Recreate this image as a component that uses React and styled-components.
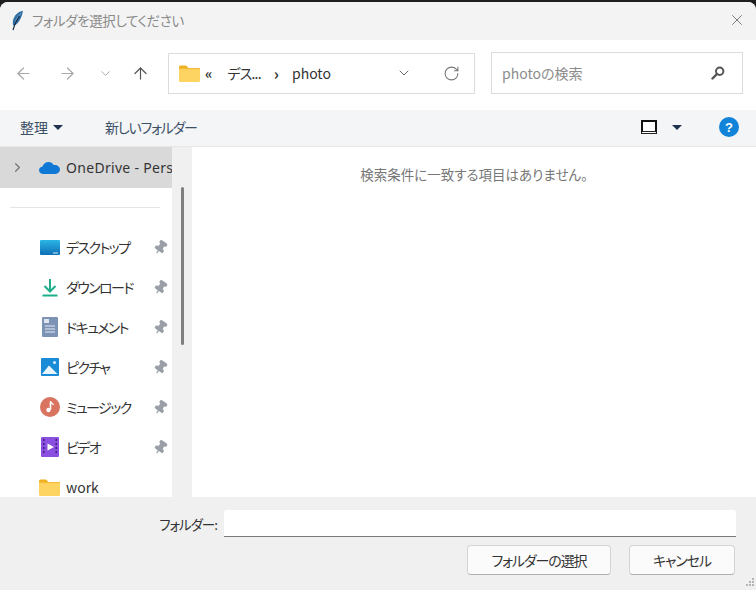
import React from 'react';
import styled, { createGlobalStyle } from 'styled-components';
import { ArrowLeft, ArrowRight, ArrowUp, ChevronDown, ChevronRight, RotateCw, X, Pin } from 'lucide-react';

const GlobalStyle = createGlobalStyle`
  html, body { margin: 0; padding: 0; background: #1f1f1f; }
  body {
    font-family: "Noto Sans CJK JP", "Noto Sans", sans-serif;
    font-feature-settings: "palt";
  }
`;

const Dialog = styled.div`
  width: 756px;
  height: 588px;
  margin-top: 2px;
  background: #f0f0f0;
  border-radius: 8px 8px 0 0;
  overflow: hidden;
  display: flex;
  flex-direction: column;
  position: relative;
`;

const TitleBar = styled.div`
  height: 38px;
  flex: none;
  box-sizing: border-box;
  background: #f3f3f3;
  display: flex;
  align-items: center;
  padding: 0 10px 2px 11px;
  gap: 8px;
  color: #8a8a8a;
  font-size: 13.5px;
  letter-spacing: -0.4px;
`;

const Title = styled.span`
  flex: 1;
`;

const NavRow = styled.div`
  height: 70px;
  flex: none;
  box-sizing: border-box;
  background: #fff;
  display: flex;
  align-items: center;
  padding: 0 13px 4px 0;
`;

const NavButton = styled.div`
  width: ${p => p.$w}px;
  display: flex;
  justify-content: center;
  color: ${p => p.$color};
`;

const PathBox = styled.div`
  width: 307px;
  height: 41px;
  margin-left: 11px;
  box-sizing: border-box;
  border: 1px solid #dcdcdc;
  display: flex;
  align-items: center;
  padding: 0 14px 0 10px;
  font-size: 14px;
  color: #333;
`;

const Crumb = styled.span`
  margin-left: ${p => p.$ml}px;
  font-size: ${p => p.$size || 14}px;
  font-weight: ${p => p.$weight || 400};
  letter-spacing: ${p => p.$spacing || 0}px;
`;

const PathSpacer = styled.div`
  flex: 1;
`;

const SearchBox = styled.div`
  width: 252px;
  height: 42px;
  margin-left: 16px;
  box-sizing: border-box;
  border: 1px solid #dcdcdc;
  display: flex;
  align-items: center;
  justify-content: space-between;
  padding: 0 17px 0 10px;
  font-size: 14px;
  color: #8c8c8c;
`;

const CommandBar = styled.div`
  height: 37px;
  flex: none;
  box-sizing: border-box;
  background: #f3f5f7;
  border-bottom: 1px solid #e6e6e6;
  display: flex;
  align-items: center;
  padding: 0 17px 2px 20px;
  font-size: 14px;
  color: #3d5166;
`;

const CommandLabel = styled.span`
  margin-left: ${p => p.$ml || 0}px;
  letter-spacing: ${p => p.$spacing || 0}px;
`;

const CaretDown = styled.span`
  width: 0;
  height: 0;
  margin-left: ${p => p.$ml}px;
  border-left: 5px solid transparent;
  border-right: 5px solid transparent;
  border-top: 5px solid #1f3350;
`;

const ViewIcon = styled.span`
  width: 16px;
  height: 14px;
  margin-left: auto;
  box-sizing: border-box;
  border: 2px solid #111;
  border-bottom: 3px double #222;
  background: #fff;
`;

const HelpIcon = styled.span`
  width: 20px;
  height: 20px;
  margin-left: 37px;
  border-radius: 50%;
  background: #1183d8;
  color: #fff;
  font-size: 13px;
  font-weight: 700;
  display: flex;
  align-items: center;
  justify-content: center;
  font-family: "Liberation Sans", sans-serif;
`;

const Main = styled.div`
  flex: 1;
  display: flex;
  min-height: 0;
`;

const Sidebar = styled.div`
  width: 172px;
  flex: none;
  background: #fff;
  overflow: hidden;
`;

const CurrentRow = styled.div`
  height: 41px;
  background: #d9d9d9;
  display: flex;
  align-items: center;
  padding-left: 10px;
  white-space: nowrap;
  overflow: hidden;
  font-size: 14px;
  letter-spacing: 0.3px;
  color: #333;
  font-family: "Noto Sans", sans-serif;
`;

const RowChevron = styled(ChevronRight)`
  flex: none;
  margin-right: 14px;
`;

const Divider = styled.div`
  height: 1px;
  background: #e5e5e5;
  margin: 19px 12px 0 10px;
`;

const NavList = styled.div`
  display: flex;
  flex-direction: column;
  margin-top: 19px;
`;

const NavItem = styled.div`
  height: 40px;
  display: flex;
  align-items: center;
  padding-left: 39px;
  font-size: 14px;
  color: #333;
`;

const ItemIcon = styled.span`
  width: 21px;
  height: 20px;
  margin-right: 6px;
  display: flex;
  align-items: center;
  justify-content: center;
  flex: none;
`;

const ItemLabel = styled.span`
  flex: 1;
  letter-spacing: ${p => (p.$kana ? -1.6 : 0)}px;
`;

const PinSlot = styled.span`
  width: 15px;
  margin-right: 4px;
  display: flex;
  color: #9a9ea6;
`;

const PinGlyph = styled(Pin)`
  transform: rotate(35deg);
`;

const ScrollTrack = styled.div`
  width: 20px;
  flex: none;
  background: #f0f0f0;
  padding: 40px 0 0 9px;
  box-sizing: border-box;
`;

const ScrollThumb = styled.div`
  width: 3px;
  height: 158px;
  border-radius: 2px;
  background: #7f7f7f;
`;

const Content = styled.div`
  flex: 1;
  background: #fff;
  display: flex;
  justify-content: center;
  padding: 17px 0 0 0;
  font-size: 13.5px;
  color: #777;
`;

const Footer = styled.div`
  height: 93px;
  flex: none;
  box-sizing: border-box;
  background: #f0f0f0;
  display: flex;
  flex-direction: column;
  padding: 13px 20px 0 0;
  position: relative;
`;

const FieldRow = styled.div`
  display: flex;
  align-items: center;
  justify-content: flex-end;
  gap: 7px;
  font-size: 13.5px;
  letter-spacing: -1px;
  color: #333;
`;

const FieldInput = styled.div`
  width: 512px;
  height: 27px;
  box-sizing: border-box;
  background: #fff;
  border-radius: 3px 3px 0 0;
  border-bottom: 1px solid #7a7a7a;
`;

const ButtonRow = styled.div`
  display: flex;
  justify-content: flex-end;
  gap: 18px;
  margin: 8px 1px 0 0;
`;

const DialogButton = styled.div`
  width: ${p => p.$w}px;
  height: 30px;
  box-sizing: border-box;
  background: #fbfbfb;
  border: 1px solid #d4d4d4;
  border-bottom-color: #b0b0b0;
  border-radius: 4px;
  display: flex;
  align-items: center;
  justify-content: center;
  font-size: 14px;
  letter-spacing: -1.1px;
  color: #333;
`;

const Grip = styled.svg`
  position: absolute;
  right: 1px;
  bottom: 1px;
`;

const RefreshIcon = styled(RotateCw)`
  margin-left: 31px;
`;

const Feather = () => (
  <svg width="13" height="21" viewBox="0 0 13 21">
    <path d="M12 .8C7.500 1.500 3 5.500 2 10.500c-.4 2.200-.2 4 .4 5.300l2-.8C8 13 10.800 7.500 12 .8z" fill="#2f6ea3" />
    <path d="M9.800 3.500C8 4.800 5.500 8.500 4.200 12.500" stroke="#8db7da" strokeWidth=".8" fill="none" />
    <path d="M8.500 6C5.500 10 3.300 14.500 2 20" stroke="#11243a" strokeWidth="1.200" fill="none" />
  </svg>
);

const FolderIcon = ({ w = 21, h = 17 }) => (
  <svg width={w} height={h} viewBox="0 0 21 17">
    <path d="M0 2a1.500 1.500 0 0 1 1.500-1.500h5.500l2.500 2.500H0z" fill="#eeb11f" />
    <rect x="0" y="3" width="21" height="14" rx="1.500" fill="#fdd462" />
    <rect x="0" y="3" width="21" height="1.200" fill="#f3bd3a" />
  </svg>
);

const SearchGlass = () => (
  <svg width="14" height="14" viewBox="0 0 14 14">
    <circle cx="8.700" cy="5.300" r="3.700" fill="none" stroke="#555" strokeWidth="2" />
    <path d="M6 8 1.500 12.500" stroke="#555" strokeWidth="2.400" strokeLinecap="round" />
  </svg>
);

const Cloud = () => (
  <svg width="21" height="13" viewBox="0 0 21 13">
    <path d="M4.500 13C2 13 0 11.300 0 9.200 0 7.300 1.500 5.800 3.500 5.500 4.300 2.800 6.800 1 9.500 1c2.200 0 4.100 1.100 5.100 3 .4-.1.800-.1 1.200-.1C18.700 3.900 21 6 21 8.600 21 11 19 13 16.500 13z" fill="#0f78d4" />
  </svg>
);

const DesktopIcon = () => (
  <svg width="20" height="15" viewBox="0 0 20 15">
    <defs>
      <linearGradient id="desk" x1="0" y1="0" x2="0" y2="1">
        <stop offset="0" stopColor="#2bb5e6" />
        <stop offset="1" stopColor="#0f6fb5" />
      </linearGradient>
    </defs>
    <rect width="20" height="15" rx="1" fill="url(#desk)" />
    <rect x="13" y="12.500" width="5" height="1" fill="#cfeefa" />
  </svg>
);

const DownloadIcon = () => (
  <svg width="16" height="19" viewBox="0 0 16 19">
    <path d="M8 1v12M2.500 8 8 13.500 13.500 8" fill="none" stroke="#1fae8c" strokeWidth="2" />
    <rect x="0.500" y="16.500" width="15" height="2" fill="#1fae8c" />
  </svg>
);

const DocIcon = () => (
  <svg width="16" height="20" viewBox="0 0 16 20">
    <rect width="16" height="20" rx="1" fill="#7d93b5" />
    <rect x="2" y="2" width="5" height="4" fill="#dfe6f0" />
    <path d="M3 9h10M3 12h10M3 15h10" stroke="#e6ebf3" strokeWidth="1.200" />
  </svg>
);

const PictureIcon = () => (
  <svg width="18" height="18" viewBox="0 0 18 18">
    <rect width="18" height="18" rx="1" fill="#1a8bd6" />
    <circle cx="13.500" cy="4.500" r="1.500" fill="#d7effb" />
    <path d="M1 16 8 7.500 16.500 16z" fill="#e9f6fd" />
  </svg>
);

const MusicIcon = () => (
  <svg width="20" height="20" viewBox="0 0 20 20">
    <circle cx="10" cy="10" r="10" fill="#d8745f" />
    <path d="M10.500 4.500v8" stroke="#fff" strokeWidth="1.600" />
    <path d="M10.500 4.500c.5 2 2.500 2 3 3.500" stroke="#fff" strokeWidth="1.300" fill="none" />
    <circle cx="8.500" cy="13" r="2.200" fill="#fff" />
  </svg>
);

const VideoIcon = () => (
  <svg width="18" height="20" viewBox="0 0 18 20">
    <rect width="18" height="20" rx="1" fill="#8a4fe0" />
    <path d="M2 3h1.500M2 7h1.500M2 11h1.500M2 15h1.500M14.500 3H16M14.500 7H16M14.500 11H16M14.500 15H16" stroke="#3c1f7a" strokeWidth="2" />
    <path d="M6.500 6.500 13 10l-6.500 3.500z" fill="#fff" />
  </svg>
);

const places = [
  { label: 'デスクトップ', icon: <DesktopIcon />, pinned: true },
  { label: 'ダウンロード', icon: <DownloadIcon />, pinned: true },
  { label: 'ドキュメント', icon: <DocIcon />, pinned: true },
  { label: 'ピクチャ', icon: <PictureIcon />, pinned: true },
  { label: 'ミュージック', icon: <MusicIcon />, pinned: true },
  { label: 'ビデオ', icon: <VideoIcon />, pinned: true },
  { label: 'work', icon: <FolderIcon /> },
];

export default function App() {
  return (
    <Dialog>
      <GlobalStyle />
      <TitleBar>
        <Feather />
        <Title>フォルダを選択してください</Title>
        <X size={18} strokeWidth={1} color="#555" />
      </TitleBar>
      <NavRow>
        <NavButton $w={47} $color="#a8a8a8"><ArrowLeft size={19} strokeWidth={1.5} /></NavButton>
        <NavButton $w={40} $color="#a8a8a8"><ArrowRight size={19} strokeWidth={1.5} /></NavButton>
        <NavButton $w={36} $color="#a8a8a8"><ChevronDown size={15} strokeWidth={1.5} /></NavButton>
        <NavButton $w={34} $color="#555"><ArrowUp size={19} strokeWidth={1.5} /></NavButton>
        <PathBox>
          <FolderIcon />
          <Crumb $ml={5} $size={14} $weight={700}>«</Crumb>
          <Crumb $ml={15} $spacing={-0.8}>デス...</Crumb>
          <Crumb $ml={13} $size={16} $weight={700}>›</Crumb>
          <Crumb $ml={13}>photo</Crumb>
          <PathSpacer />
          <ChevronDown size={16} strokeWidth={1.500} color="#666" />
          <RefreshIcon size={17} strokeWidth={1.500} color="#777" />
        </PathBox>
        <SearchBox>
          photoの検索
          <SearchGlass />
        </SearchBox>
      </NavRow>
      <CommandBar>
        <CommandLabel>整理</CommandLabel>
        <CaretDown $ml={5} />
        <CommandLabel $ml={42} $spacing={-1.2}>新しいフォルダー</CommandLabel>
        <ViewIcon />
        <CaretDown $ml={15} />
        <HelpIcon>?</HelpIcon>
      </CommandBar>
      <Main>
        <Sidebar>
          <CurrentRow>
            <RowChevron size={15} strokeWidth={2} color="#777" />
            <ItemIcon><Cloud /></ItemIcon>
            OneDrive - Personal
          </CurrentRow>
          <Divider />
          <NavList>
            {places.map(place => (
              <NavItem key={place.label}>
                <ItemIcon>{place.icon}</ItemIcon>
                <ItemLabel $kana={place.pinned}>{place.label}</ItemLabel>
                {place.pinned && (
                  <PinSlot><PinGlyph size={15} fill="currentColor" /></PinSlot>
                )}
              </NavItem>
            ))}
          </NavList>
        </Sidebar>
        <ScrollTrack><ScrollThumb /></ScrollTrack>
        <Content>検索条件に一致する項目はありません。</Content>
      </Main>
      <Footer>
        <FieldRow>
          フォルダー:
          <FieldInput />
        </FieldRow>
        <ButtonRow>
          <DialogButton $w={144}>フォルダーの選択</DialogButton>
          <DialogButton $w={106}>キャンセル</DialogButton>
        </ButtonRow>
        <Grip width="12" height="12" viewBox="0 0 12 12">
          <path d="M9 1h2v2H9zM6 4h2v2H6zM9 4h2v2H9zM3 7h2v2H3zM6 7h2v2H6zM9 7h2v2H9z" fill="#b5b5b5" />
        </Grip>
      </Footer>
    </Dialog>
  );
}
